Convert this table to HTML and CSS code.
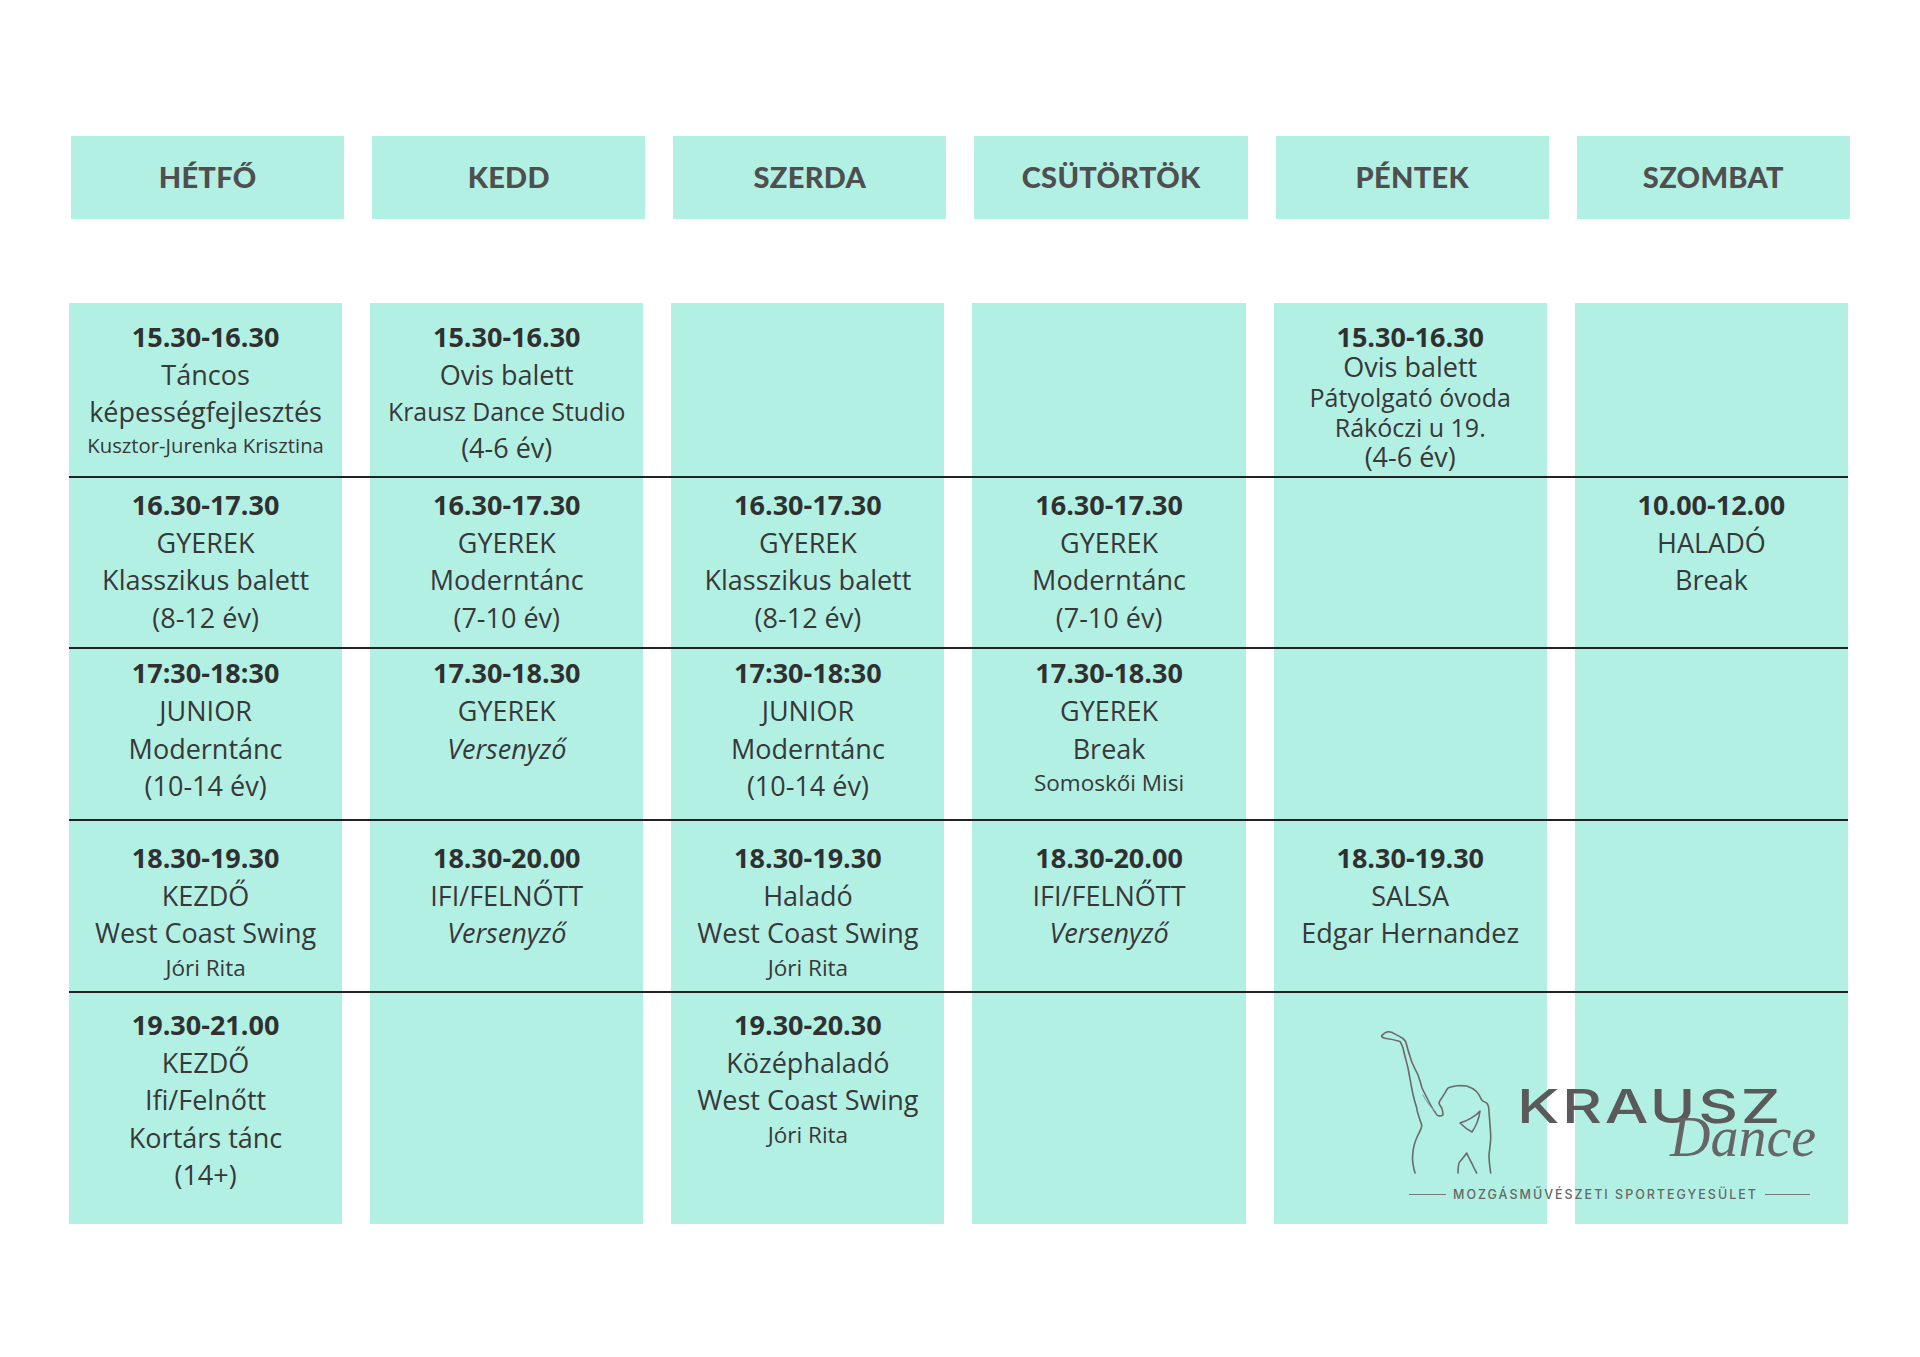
FILE: index.html
```html
<!DOCTYPE html>
<html lang="hu">
<head>
<meta charset="utf-8">
<title>Órarend</title>
<link rel="stylesheet" href="styles.css">
</head>
<body>
<div class="page">
  <div class="days">
    <div class="day">HÉTFŐ</div>
    <div class="day">KEDD</div>
    <div class="day">SZERDA</div>
    <div class="day">CSÜTÖRTÖK</div>
    <div class="day">PÉNTEK</div>
    <div class="day">SZOMBAT</div>
  </div>

  <div class="schedule">
    <div class="row r1">
      <div class="cell">
        <div class="t">15.30-16.30</div>
        <div class="m">Táncos</div>
        <div class="m">képességfejlesztés</div>
        <div class="xs">Kusztor-Jurenka Krisztina</div>
      </div>
      <div class="cell">
        <div class="t">15.30-16.30</div>
        <div class="m">Ovis balett</div>
        <div class="s2">Krausz Dance Studio</div>
        <div class="m">(4-6 év)</div>
      </div>
      <div class="cell"></div>
      <div class="cell"></div>
      <div class="cell tight">
        <div class="t">15.30-16.30</div>
        <div class="m">Ovis balett</div>
        <div class="s">Pátyolgató óvoda</div>
        <div class="s">Rákóczi u 19.</div>
        <div class="m">(4-6 év)</div>
      </div>
      <div class="cell"></div>
    </div>

    <div class="row r2">
      <div class="cell">
        <div class="t">16.30-17.30</div>
        <div class="m">GYEREK</div>
        <div class="m">Klasszikus balett</div>
        <div class="m">(8-12 év)</div>
      </div>
      <div class="cell">
        <div class="t">16.30-17.30</div>
        <div class="m">GYEREK</div>
        <div class="m">Moderntánc</div>
        <div class="m">(7-10 év)</div>
      </div>
      <div class="cell">
        <div class="t">16.30-17.30</div>
        <div class="m">GYEREK</div>
        <div class="m">Klasszikus balett</div>
        <div class="m">(8-12 év)</div>
      </div>
      <div class="cell">
        <div class="t">16.30-17.30</div>
        <div class="m">GYEREK</div>
        <div class="m">Moderntánc</div>
        <div class="m">(7-10 év)</div>
      </div>
      <div class="cell"></div>
      <div class="cell">
        <div class="t">10.00-12.00</div>
        <div class="m">HALADÓ</div>
        <div class="m">Break</div>
      </div>
    </div>

    <div class="row r3">
      <div class="cell">
        <div class="t">17:30-18:30</div>
        <div class="m">JUNIOR</div>
        <div class="m">Moderntánc</div>
        <div class="m">(10-14 év)</div>
      </div>
      <div class="cell">
        <div class="t">17.30-18.30</div>
        <div class="m">GYEREK</div>
        <div class="m i">Versenyző</div>
      </div>
      <div class="cell">
        <div class="t">17:30-18:30</div>
        <div class="m">JUNIOR</div>
        <div class="m">Moderntánc</div>
        <div class="m">(10-14 év)</div>
      </div>
      <div class="cell">
        <div class="t">17.30-18.30</div>
        <div class="m">GYEREK</div>
        <div class="m">Break</div>
        <div class="s">Somoskői Misi</div>
      </div>
      <div class="cell"></div>
      <div class="cell"></div>
    </div>

    <div class="row r4">
      <div class="cell">
        <div class="t">18.30-19.30</div>
        <div class="m">KEZDŐ</div>
        <div class="m">West Coast Swing</div>
        <div class="s">Jóri Rita</div>
      </div>
      <div class="cell">
        <div class="t">18.30-20.00</div>
        <div class="m">IFI/FELNŐTT</div>
        <div class="m i">Versenyző</div>
      </div>
      <div class="cell">
        <div class="t">18.30-19.30</div>
        <div class="m">Haladó</div>
        <div class="m">West Coast Swing</div>
        <div class="s">Jóri Rita</div>
      </div>
      <div class="cell">
        <div class="t">18.30-20.00</div>
        <div class="m">IFI/FELNŐTT</div>
        <div class="m i">Versenyző</div>
      </div>
      <div class="cell">
        <div class="t">18.30-19.30</div>
        <div class="m">SALSA</div>
        <div class="m">Edgar Hernandez</div>
      </div>
      <div class="cell"></div>
    </div>

    <div class="row r5">
      <div class="cell">
        <div class="t">19.30-21.00</div>
        <div class="m">KEZDŐ</div>
        <div class="m">Ifi/Felnőtt</div>
        <div class="m">Kortárs tánc</div>
        <div class="m">(14+)</div>
      </div>
      <div class="cell"></div>
      <div class="cell">
        <div class="t">19.30-20.30</div>
        <div class="m">Középhaladó</div>
        <div class="m">West Coast Swing</div>
        <div class="s">Jóri Rita</div>
      </div>
      <div class="cell"></div>
      <div class="cell"></div>
      <div class="cell"></div>
    </div>

    <div class="logo">
      <div class="logo-top">
        <svg class="figure" width="140" height="160" viewBox="0 0 140 160" aria-hidden="true">
          <path d="M45,148 C43,141 42,136 42.7,130 C43,124 45,116 48,110 C50,106 52,103 51.7,100 C49,92 47,87 46.7,83 C44,74 42.5,68 41.7,63 C40,54 39,48 38,43 C36,35 34,28 33,23 C32,20 31,18 30,16.5 C25,15 20,14 15,13.3 C13,12.8 11.5,12 11.7,10.8 C13,9 16,7 18,6.7 C19.5,6.6 20.5,7.2 21.7,7.3 C25,9 29,11 33,13.5 C35,15 36,17 36.7,20 C38,26 40,31 41.7,36.7 C44,42 46,46 48,50 C49.5,54 51,59 52,63 C54,67 56,71 58,75 C60,79 62,83 65,87 C66,89 67,90.5 68,90.7 C70,91 72,91 73,90 C73,87 72.5,85 71.7,83 C70.5,81 69,79.5 69,78 C69.5,76 70.5,74.5 71.7,73 C73,71 74,69 75,68 C76,66 77,64 78,63 C81,62 84,61 86.7,60.8 C90,60.5 94,60.6 96.7,61 C100,62 104,64 106.7,66.7 C109,69 110.5,72.5 111.7,75 C113,76.5 115,77 116.7,78 C118.5,80 119,83 119,86.7 C119.5,94 120.3,102 120.7,110 C121,117 119.5,124 119,130 C119,137 120,143 120.7,148"/>
          <path d="M110,86 C106,91 97,96 90,98 C93,101 98,105 102,107 C106,101 109,94 110,86"/>
          <path d="M88,148 C88,143 88.5,139 89.5,137 C92,134 95,131 96.7,128 C98,131 100,135 101.7,138 C103,141 105,145 106.7,148"/>
          <path d="M53,70 C56,76 60,82 65,86" class="faint"/>
        </svg>
        <div class="wordmark">
          <div class="krausz">KRAUSZ</div>
          <div class="dance">Dance</div>
        </div>
      </div>
      <div class="tagline">
        <span class="tag-line left"></span>
        <span class="tag-text">MOZGÁSMŰVÉSZETI SPORTEGYESÜLET</span>
        <span class="tag-line right"></span>
      </div>
    </div>
  </div>
</div>
</body>
</html>
```

FILE: styles.css
```css
* {
  box-sizing: border-box;
  margin: 0;
  padding: 0;
}

body {
  margin: 0;
  background: #ffffff;
  font-family: "Open Sans", "Liberation Sans", sans-serif;
  color: #383838;
}

.page {
  width: 1920px;
  height: 1357px;
  padding: 136px 0 0 69px;
}

.days {
  display: grid;
  grid-template-columns: repeat(6, 1fr);
  column-gap: 28px;
  width: 1779px;
  margin-left: 2px;
}

.day {
  height: 83px;
  background: #b2f0e4;
  display: flex;
  align-items: center;
  justify-content: center;
  padding-bottom: 2px;
  font-family: "Lato", "Inter", sans-serif;
  font-weight: 900;
  font-size: 29px;
  letter-spacing: 0.3px;
  color: #4f4f4f;
}

.schedule {
  position: relative;
  width: 1779px;
  margin-top: 84px;
}

.row {
  display: grid;
  grid-template-columns: repeat(6, 1fr);
  column-gap: 28px;
  border-top: 2px solid #222222;
}

.row.r1 {
  border-top: none;
  height: 173px;
}

.row.r2 { height: 171px; }
.row.r3 { height: 172px; }
.row.r4 { height: 172px; }
.row.r5 { height: 233px; }

.cell {
  background: #b2f0e4;
  text-align: center;
  white-space: nowrap;
}

.r1 .cell { padding-top: 14.5px; }
.r2 .cell { padding-top: 7.5px; }
.r3 .cell { padding-top: 5px; }
.r4 .cell { padding-top: 17.5px; }
.r5 .cell { padding-top: 12.5px; }

.t {
  font-weight: 700;
  font-size: 27px;
  line-height: 38px;
  color: #303030;
}

.m {
  font-size: 27px;
  line-height: 37.5px;
}

.i {
  font-style: italic;
}

.s {
  font-size: 22.5px;
  line-height: 32px;
}

.s2 {
  font-size: 24.8px;
  line-height: 36px;
}

.xs {
  font-size: 20.3px;
  line-height: 28px;
}

.r1 .cell.tight {
  padding-top: 18.5px;
}

.tight .t,
.tight .m {
  line-height: 30px;
}

.tight .s {
  font-size: 25px;
  line-height: 30px;
}

/* Logo */
.logo {
  position: absolute;
  left: 1301px;
  top: 722px;
  width: 460px;
}

.logo-top {
  display: flex;
  align-items: flex-start;
}

.figure {
  display: block;
  flex: none;
  fill: none;
  stroke: #6a6a6a;
  stroke-width: 1.6;
  stroke-linecap: round;
  stroke-linejoin: round;
}

.figure .faint {
  stroke: #8a9c98;
  stroke-width: 1;
}

.wordmark {
  position: relative;
  margin-left: 7px;
  margin-top: 58px;
}

.krausz {
  font-family: "Inter", "Liberation Sans", sans-serif;
  font-weight: 500;
  font-size: 46px;
  line-height: 46px;
  letter-spacing: 2px;
  color: #5a5a5a;
  transform: scaleX(1.34);
  transform-origin: left center;
}

.dance {
  position: absolute;
  left: 153px;
  top: 26px;
  font-family: "Liberation Serif", serif;
  font-style: italic;
  font-size: 56px;
  line-height: 1;
  color: #666666;
}

.tagline {
  display: flex;
  align-items: center;
  gap: 7px;
  margin-left: 39px;
  margin-top: 2px;
}

.tag-line {
  display: block;
  height: 1px;
  background: #777777;
}

.tag-line.left { width: 37px; }
.tag-line.right { width: 45px; }

.tag-text {
  font-family: "Inter", "Liberation Sans", sans-serif;
  font-weight: 500;
  font-size: 12.5px;
  letter-spacing: 2px;
  color: #666666;
  white-space: nowrap;
}
```
